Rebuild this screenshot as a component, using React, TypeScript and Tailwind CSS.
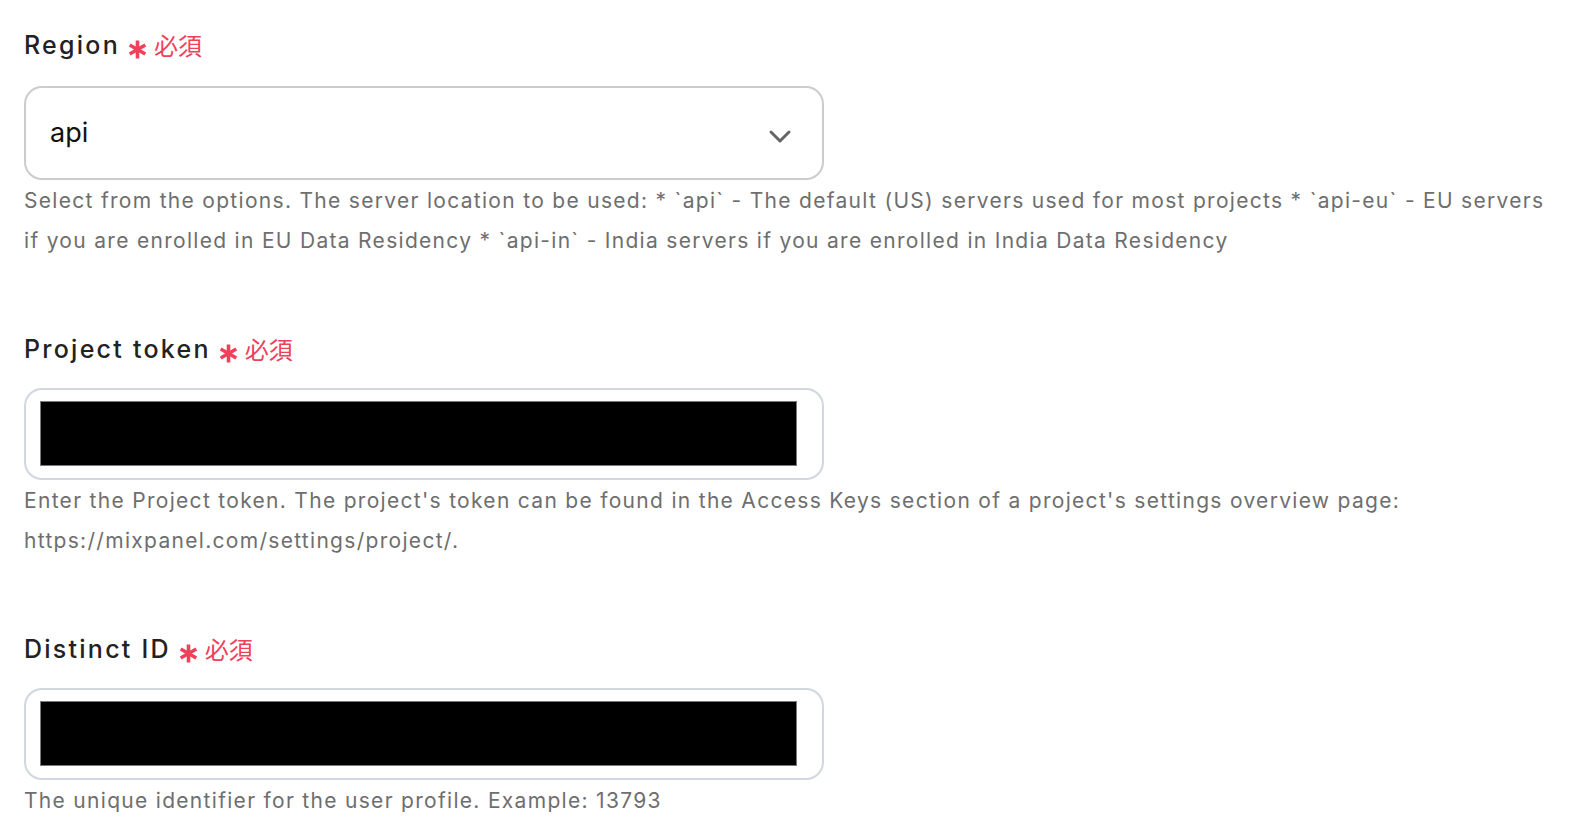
import React from "react";

function Asterisk() {
  return (
    <svg width="19" height="19" viewBox="0 0 19 19" className="mt-[8px]" aria-hidden>
      <g stroke="#f0405a" strokeWidth="3.6" strokeLinecap="butt">
        <line x1="9.5" y1="0.5" x2="9.5" y2="18.5" />
        <line x1="1.7" y1="5" x2="17.3" y2="14" />
        <line x1="1.7" y1="14" x2="17.3" y2="5" />
      </g>
    </svg>
  );
}

function Label({ text }: { text: string }) {
  return (
    <div className="flex items-center h-8">
      <span className="text-[25px] leading-8 tracking-[0.09em] text-[#222222] font-medium">{text}</span>
      <span className="ml-[8px] flex items-center">
        <Asterisk />
      </span>
      <span
        className="ml-[7px] text-[24px] leading-8 text-[#f0405a]"
        style={{ fontFamily: '"Noto Sans CJK JP", sans-serif' }}
      >
        必須
      </span>
    </div>
  );
}

function Redacted() {
  return (
    <div className="mt-[23px] w-[800px] h-[92px] rounded-[18px] border-2 border-[#d1d7e0] pl-[14px] pr-[25px] pt-[11px]">
      <div className="h-[65px] bg-black border border-[#7a7a7a]" />
    </div>
  );
}

export default function App() {
  return (
    <div
      className="min-h-screen bg-white pl-6 pr-6 pt-[29px]"
      style={{ fontFamily: 'Inter, "Noto Sans CJK JP", sans-serif' }}
    >
      <section>
        <Label text="Region" />
        <div className="mt-[25px] w-[800px] h-[94px] rounded-[18px] border-2 border-[#cccccc] flex items-center justify-between pl-[24px] pr-[30px]">
          <span className="text-[27px] text-[#111111]">api</span>
          <svg width="24" height="16" viewBox="0 0 24 16" className="mt-[6px]" aria-hidden>
            <path d="M3 4 L12 13 L21 4" fill="none" stroke="#666666" strokeWidth="3" strokeLinecap="round" strokeLinejoin="round" />
          </svg>
        </div>
        <p className="mt-px text-[21px] leading-[40px] tracking-[0.062em] text-[#6e6e6e]">
          Select from the options. The server location to be used: * `api` - The default (US) servers used for most projects * `api-eu` - EU servers if you are enrolled in EU Data Residency * `api-in` - India servers if you are enrolled in India Data Residency
        </p>
      </section>

      <section className="mt-[72px]">
        <Label text="Project token" />
        <Redacted />
        <p className="mt-px text-[21px] leading-[40px] tracking-[0.062em] text-[#6e6e6e]">
          Enter the Project token. The project's token can be found in the Access Keys section of a project's settings overview page: https://mixpanel.com/settings/project/.
        </p>
      </section>

      <section className="mt-[72px]">
        <Label text="Distinct ID" />
        <Redacted />
        <p className="mt-px text-[21px] leading-[40px] tracking-[0.062em] text-[#6e6e6e]">
          The unique identifier for the user profile. Example: 13793
        </p>
      </section>
    </div>
  );
}
